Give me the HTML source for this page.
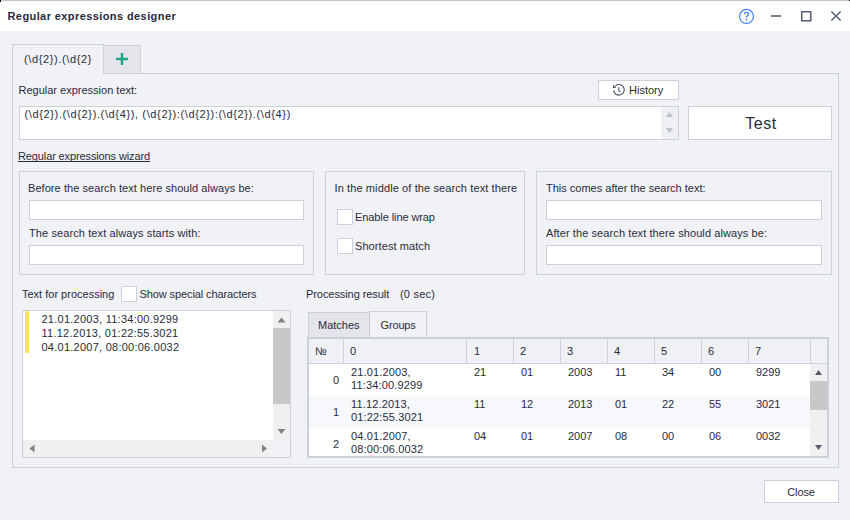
<!DOCTYPE html>
<html><head><meta charset="utf-8">
<style>
*{box-sizing:border-box;margin:0;padding:0}
html,body{width:850px;height:520px;overflow:hidden;background:#f1f2f6}
body{position:relative;font-family:"Liberation Sans",sans-serif;font-size:11px;color:#272c3b}
.a{position:absolute}
.t{position:absolute;white-space:pre;line-height:13px;font-size:11px}
.bx{position:absolute;border:1px solid #cbd0da}
.wh{background:#fff}
.cb{position:absolute;width:16px;height:16px;border:1px solid #cbd0da;background:#fff}
</style></head><body>
<!-- title bar -->
<div class="a" style="left:0;top:0;width:850px;height:31px;background:#fff"></div>
<div class="a" style="left:0;top:0;width:850px;height:1px;background:#c8c8c8"></div><div class="a" style="left:0;top:0;width:1px;height:2px;background:#000"></div><div class="a" style="left:849px;top:0;width:1px;height:1px;background:#000"></div>
<div class="t" style="left:7.5px;top:10px;font-weight:bold;letter-spacing:0.41px">Regular expressions designer</div>
<svg class="a" style="left:730px;top:0" width="120" height="31" viewBox="0 0 120 31">
 <circle cx="16.5" cy="16.4" r="7" fill="none" stroke="#4586f6" stroke-width="1.25"/>
 <path d="M14.6 14.3 C14.6 13 15.5 12.3 16.6 12.3 C17.8 12.3 18.6 13.1 18.6 14.1 C18.6 15.1 17.9 15.5 17.2 16 C16.6 16.4 16.5 16.8 16.5 17.7" fill="none" stroke="#4586f6" stroke-width="1.3"/>
 <circle cx="16.5" cy="19.6" r="0.85" fill="#4586f6"/>
 <rect x="41" y="15" width="10" height="2" fill="#7c8494"/>
 <rect x="71.75" y="11.75" width="9" height="9" fill="none" stroke="#535d74" stroke-width="1.5"/>
 <path d="M101.4 11.4 L110.6 20.6 M110.6 11.4 L101.4 20.6" stroke="#535d74" stroke-width="1.4"/>
</svg>

<!-- outer tab panel -->
<div class="bx" style="left:12px;top:73px;width:827px;height:395px"></div>
<div class="a" style="left:12px;top:44px;width:92px;height:30px;border:1px solid #cbd0da;border-bottom:none;background:#f1f2f6"></div>
<div class="t" style="left:24px;top:53px;letter-spacing:0.62px">(\d{2}).(\d{2}</div>
<div class="a" style="left:103px;top:45px;width:38px;height:29px;border:1px solid #cbd0da;background:#e4e5ea"></div>
<svg class="a" style="left:116px;top:53px" width="12" height="12"><rect x="0" y="4.8" width="12" height="2.4" fill="#1aa67f"/><rect x="4.8" y="0" width="2.4" height="12" fill="#1aa67f"/></svg>

<div class="t" style="left:18.5px;top:84px">Regular expression text:</div>
<!-- history -->
<div class="bx wh" style="left:598px;top:80px;width:81px;height:20px"></div>
<svg class="a" style="left:613px;top:84px" width="12" height="12" viewBox="0 0 12 12">
 <path d="M0.62 6.2 A5.3 5.3 0 1 0 2.15 2.05" fill="none" stroke="#4b5264" stroke-width="1.1"/>
 <path d="M0 0.8 L0 4 L3.2 4Z" fill="#4b5264"/>
 <path d="M5.8 3.3 V6.8 L7.5 8.2" fill="none" stroke="#4b5264" stroke-width="1.05"/>
</svg>
<div class="t" style="left:629px;top:84px">History</div>

<!-- regex textarea -->
<div class="bx wh" style="left:19px;top:106px;width:660px;height:34px"></div>
<div class="a" style="left:661px;top:107px;width:17px;height:32px;background:#eef0f4"></div>
<svg class="a" style="left:661px;top:107px" width="17" height="32"><path d="M5 10 L8.5 5 L12 10Z" fill="#bcc0c8"/><path d="M5 21 L8.5 26 L12 21Z" fill="#bcc0c8"/></svg>
<div class="t" style="left:24.5px;top:108px;letter-spacing:0.63px">(\d{2}).(\d{2}).(\d{4}), (\d{2}):(\d{2}):(\d{2}).(\d{4})</div>

<!-- test -->
<div class="bx wh" style="left:688px;top:106px;width:144px;height:34px"></div>
<div class="t" style="left:689px;top:115px;width:144px;text-align:center;font-size:16px;line-height:18px;letter-spacing:0.6px">Test</div>

<!-- wizard link -->
<div class="t" style="left:18px;top:150px;text-decoration:underline;text-decoration-skip-ink:none;letter-spacing:-0.12px">Regular expressions wizard</div>

<!-- group boxes -->
<div class="bx" style="left:19px;top:171px;width:295px;height:104px"></div>
<div class="t" style="left:28px;top:182px;letter-spacing:0.06px">Before the search text here should always be:</div>
<div class="bx wh" style="left:29px;top:200px;width:275px;height:20px"></div>
<div class="t" style="left:29px;top:227px;letter-spacing:0.1px">The search text always starts with:</div>
<div class="bx wh" style="left:29px;top:245px;width:275px;height:20px"></div>

<div class="bx" style="left:325px;top:171px;width:200px;height:104px"></div>
<div class="t" style="left:334.5px;top:182px;letter-spacing:0.11px">In the middle of the search text there</div>
<div class="cb" style="left:337px;top:209px"></div>
<div class="t" style="left:355px;top:211px;letter-spacing:-0.09px">Enable line wrap</div>
<div class="cb" style="left:337px;top:238px"></div>
<div class="t" style="left:355px;top:240px;letter-spacing:0.08px">Shortest match</div>

<div class="bx" style="left:536px;top:171px;width:296px;height:104px"></div>
<div class="t" style="left:546px;top:182px">This comes after the search text:</div>
<div class="bx wh" style="left:546px;top:200px;width:276px;height:20px"></div>
<div class="t" style="left:546px;top:227px;letter-spacing:0.09px">After the search text there should always be:</div>
<div class="bx wh" style="left:546px;top:245px;width:276px;height:20px"></div>

<!-- text for processing -->
<div class="t" style="left:22px;top:288px">Text for processing</div>
<div class="cb" style="left:121px;top:286px"></div>
<div class="t" style="left:139.5px;top:288px;letter-spacing:-0.1px">Show special characters</div>
<div class="bx wh" style="left:22px;top:310px;width:269px;height:148px"></div>
<div class="a" style="left:25px;top:311px;width:4px;height:42px;background:#fce35a"></div>
<div class="t" style="left:41.5px;top:312px;line-height:14px;letter-spacing:0.25px">21.01.2003, 11:34:00.9299
11.12.2013, 01:22:55.3021
04.01.2007, 08:00:06.0032</div>
<!-- v scrollbar -->
<div class="a" style="left:273px;top:311px;width:17px;height:129px;background:#f0f0f0"></div>
<div class="a" style="left:273px;top:328px;width:17px;height:76px;background:#c8c8c8"></div>
<svg class="a" style="left:273px;top:311px" width="17" height="129"><path d="M4.5 11.5 L8.5 6.5 L12.5 11.5Z" fill="#80828c"/><path d="M4.5 118 L8.5 123 L12.5 118Z" fill="#80828c"/></svg>
<!-- h scrollbar -->
<div class="a" style="left:23px;top:440px;width:250px;height:17px;background:#f0f0f0"></div>
<div class="a" style="left:273px;top:440px;width:17px;height:17px;background:#f1f2f6"></div>
<svg class="a" style="left:23px;top:440px" width="250" height="17"><path d="M11.5 4.5 L6.5 8.5 L11.5 12.5Z" fill="#80828c"/><path d="M239 4.5 L244 8.5 L239 12.5Z" fill="#80828c"/></svg>

<!-- processing result -->
<div class="t" style="left:306px;top:288px;letter-spacing:-0.07px">Processing result</div>
<div class="t" style="left:400px;top:288px;letter-spacing:0.2px">(0 sec)</div>
<div class="a" style="left:308px;top:312px;width:62px;height:26px;border:1px solid #cbd0da;border-bottom:none;background:#e4e5ea"></div>
<div class="t" style="left:318px;top:319px">Matches</div>
<div class="a" style="left:369px;top:311px;width:58px;height:27px;border:1px solid #cbd0da;border-bottom:none;background:#f1f2f6"></div>
<div class="t" style="left:380.5px;top:319px;letter-spacing:-0.15px">Groups</div>

<!-- grid -->
<div class="a" style="left:307px;top:337px;width:522px;height:121px;border:2px solid #cbd0da;background:#fff"></div>
<div class="a" style="left:309px;top:339px;width:518px;height:25px;background:#eff1f5;border-bottom:1px solid #cbd0da"></div>
<div class="a" style="left:343px;top:339px;width:1px;height:24px;background:#cbd0da"></div>
<div class="a" style="left:466px;top:339px;width:1px;height:24px;background:#cbd0da"></div>
<div class="a" style="left:513px;top:339px;width:1px;height:24px;background:#cbd0da"></div>
<div class="a" style="left:560px;top:339px;width:1px;height:24px;background:#cbd0da"></div>
<div class="a" style="left:607px;top:339px;width:1px;height:24px;background:#cbd0da"></div>
<div class="a" style="left:654px;top:339px;width:1px;height:24px;background:#cbd0da"></div>
<div class="a" style="left:701px;top:339px;width:1px;height:24px;background:#cbd0da"></div>
<div class="a" style="left:748px;top:339px;width:1px;height:24px;background:#cbd0da"></div>
<div class="a" style="left:810px;top:339px;width:1px;height:24px;background:#cbd0da"></div>
<div class="t" style="left:315px;top:345px">№</div>
<div class="t" style="left:350px;top:345px">0</div>
<div class="t" style="left:474px;top:345px">1</div>
<div class="t" style="left:520px;top:345px">2</div>
<div class="t" style="left:567px;top:345px">3</div>
<div class="t" style="left:614px;top:345px">4</div>
<div class="t" style="left:661px;top:345px">5</div>
<div class="t" style="left:708px;top:345px">6</div>
<div class="t" style="left:755px;top:345px">7</div>
<!-- rows -->
<div class="a" style="left:309px;top:396px;width:501px;height:32px;background:#f7f8fb"></div>
<div class="t" style="left:333px;top:374px">0</div>
<div class="t" style="left:351px;top:366px;line-height:13px;letter-spacing:0.15px">21.01.2003,
11:34:00.9299</div>
<div class="t" style="left:474px;top:366px">21</div>
<div class="t" style="left:521px;top:366px">01</div>
<div class="t" style="left:568px;top:366px">2003</div>
<div class="t" style="left:615px;top:366px">11</div>
<div class="t" style="left:662px;top:366px">34</div>
<div class="t" style="left:709px;top:366px">00</div>
<div class="t" style="left:756px;top:366px">9299</div>

<div class="t" style="left:333px;top:406px">1</div>
<div class="t" style="left:351px;top:398px;line-height:13px;letter-spacing:0.15px">11.12.2013,
01:22:55.3021</div>
<div class="t" style="left:474px;top:398px">11</div>
<div class="t" style="left:521px;top:398px">12</div>
<div class="t" style="left:568px;top:398px">2013</div>
<div class="t" style="left:615px;top:398px">01</div>
<div class="t" style="left:662px;top:398px">22</div>
<div class="t" style="left:709px;top:398px">55</div>
<div class="t" style="left:756px;top:398px">3021</div>

<div class="t" style="left:333px;top:438px">2</div>
<div class="t" style="left:351px;top:430px;line-height:13px;letter-spacing:0.15px">04.01.2007,
08:00:06.0032</div>
<div class="t" style="left:474px;top:430px">04</div>
<div class="t" style="left:521px;top:430px">01</div>
<div class="t" style="left:568px;top:430px">2007</div>
<div class="t" style="left:615px;top:430px">08</div>
<div class="t" style="left:662px;top:430px">00</div>
<div class="t" style="left:709px;top:430px">06</div>
<div class="t" style="left:756px;top:430px">0032</div>
<!-- grid v scrollbar -->
<div class="a" style="left:810px;top:364px;width:17px;height:92px;background:#f0f0f0"></div>
<div class="a" style="left:810px;top:381px;width:17px;height:29px;background:#c8c8c8"></div>
<svg class="a" style="left:810px;top:364px" width="17" height="92"><path d="M5 11 L8.5 6 L12 11Z" fill="#555c6a"/><path d="M5 81 L8.5 86 L12 81Z" fill="#555c6a"/></svg>

<!-- close -->
<div class="bx wh" style="left:764px;top:480px;width:75px;height:23px"></div>
<div class="t" style="left:763.5px;top:486px;width:75px;text-align:center;letter-spacing:-0.12px">Close</div>
</body></html>
